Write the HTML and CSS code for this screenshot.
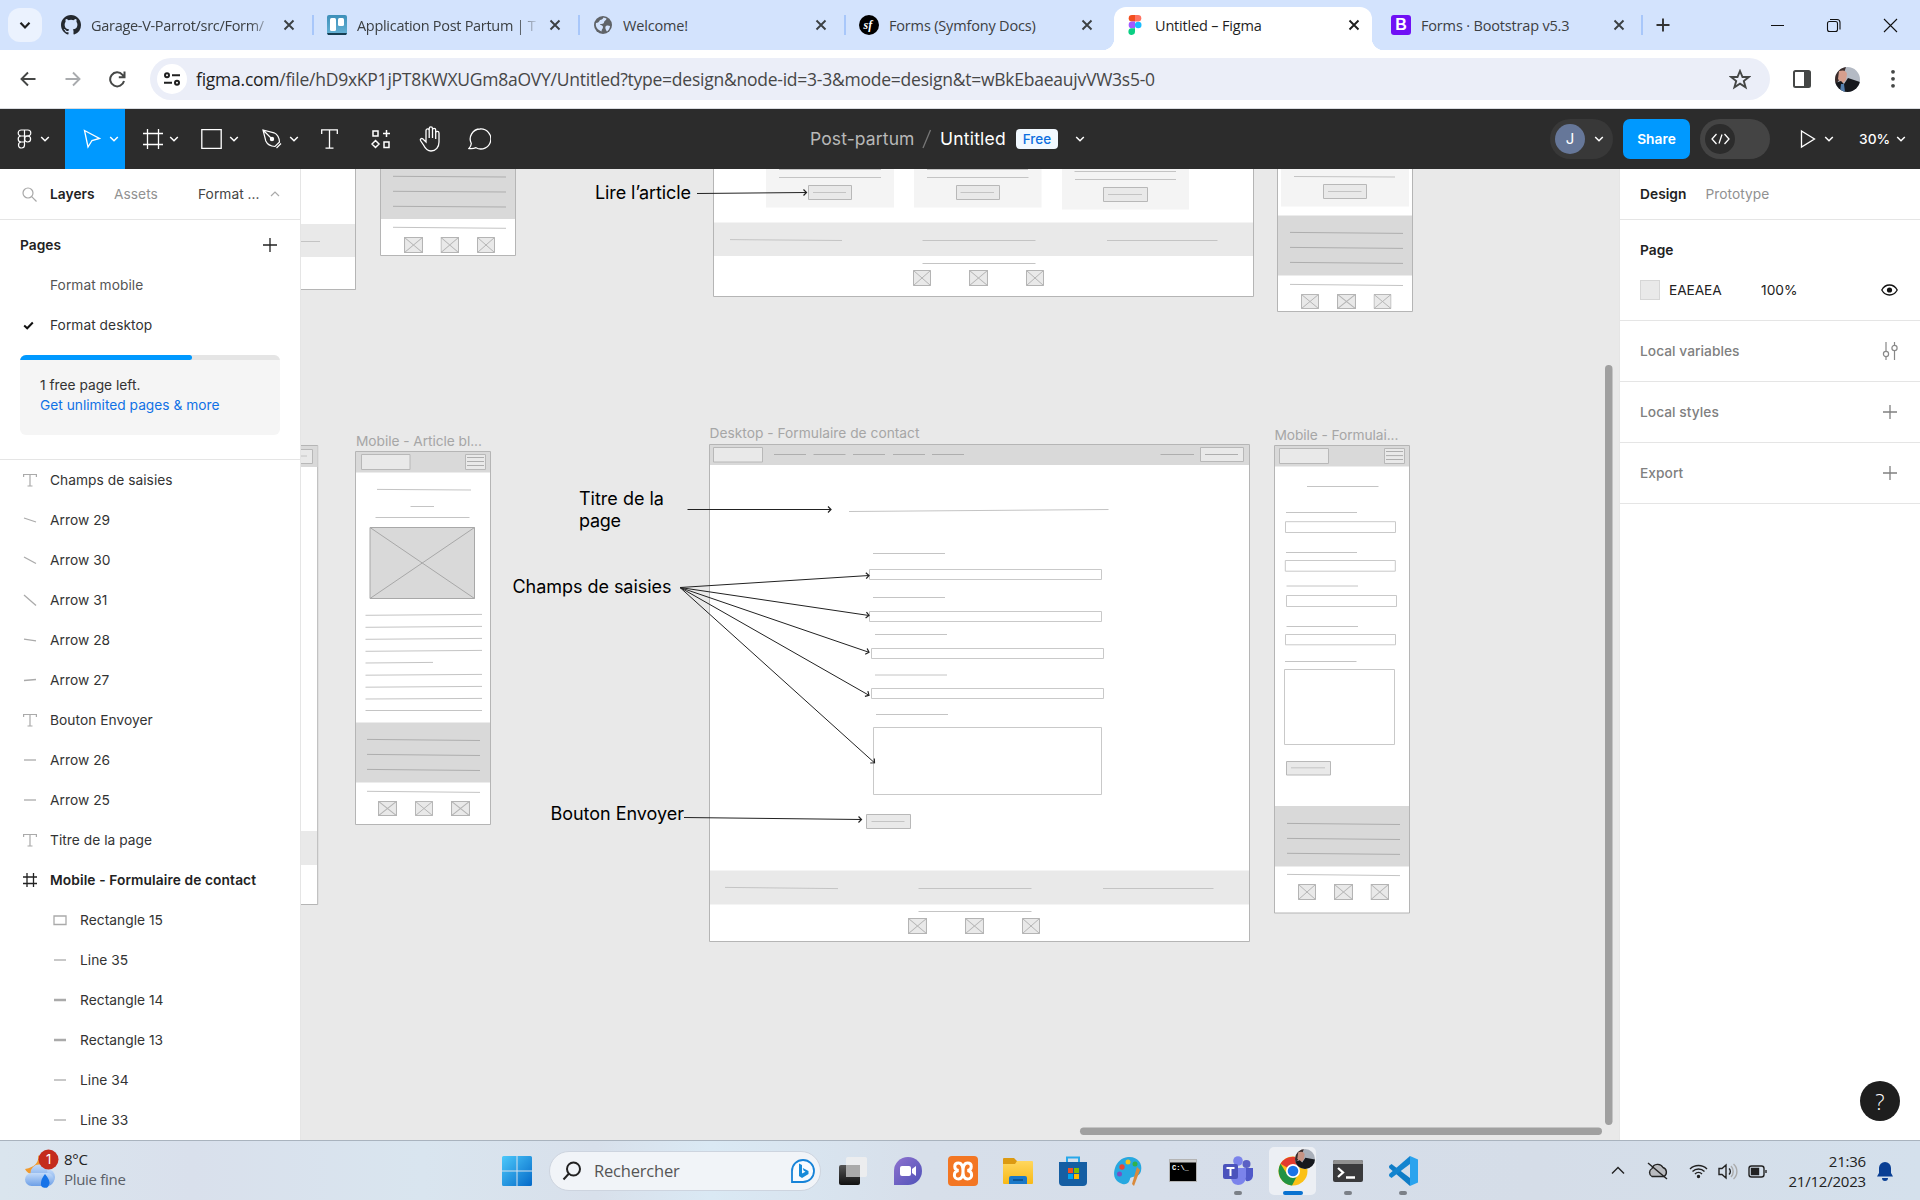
FILE: index.html
```html
<!DOCTYPE html>
<html lang="fr">
<head>
<meta charset="utf-8">
<title>Untitled – Figma</title>
<link rel="stylesheet" href="styles.css">
</head>
<body>
<svg class="defs" width="0" height="0" aria-hidden="true">
  <symbol id="chev" viewBox="0 0 10 8"><path d="M1.2 2 5 5.8 8.800 2" fill="none" stroke="currentColor" stroke-width="1.5"/></symbol>
  <symbol id="close" viewBox="0 0 12 12"><path d="M1.500 1.500 10.500 10.500M10.500 1.500 1.500 10.500" fill="none" stroke="currentColor" stroke-width="1.900"/></symbol>
  <symbol id="plus" viewBox="0 0 14 14"><path d="M7 0V14M0 7H14" fill="none" stroke="currentColor" stroke-width="1.300"/></symbol>
  <symbol id="text" viewBox="0 0 14 14"><path d="M.6 4V1.500H13.400V4M7 1.500V13M4.500 13H9.500" fill="none" stroke="currentColor" stroke-width="1.200"/></symbol>
  <symbol id="xbox" viewBox="0 0 18 16" preserveAspectRatio="none"><path d="M.5.5H17.500V15.500H.5ZM.5.5 17.500 15.500M17.500.5.5 15.500" fill="#e9e9e9" stroke="#b4b4b4"/></symbol>
</svg>

<header class="tabstrip">
  <div class="tab-search"><svg width="12" height="9" viewBox="0 0 12 9"><path d="M1.500 1.800 6 6.500 10.500 1.800" fill="none" stroke="#1f1f1f" stroke-width="2.200"/></svg></div>
  <div class="tab"><svg class="fav" viewBox="0 0 16 16"><path fill="#24292f" d="M8 0C3.580 0 0 3.580 0 8c0 3.540 2.290 6.530 5.470 7.590.4.070.55-.17.55-.38 0-.19-.01-.82-.01-1.490-2.010.37-2.530-.49-2.690-.94-.09-.23-.48-.94-.82-1.130-.28-.15-.68-.52-.01-.53.63-.01 1.080.58 1.230.82.72 1.210 1.870.87 2.330.66.070-.52.28-.87.51-1.070-1.780-.2-3.640-.89-3.640-3.950 0-.87.31-1.590.82-2.150-.08-.2-.36-1.020.08-2.120 0 0 .67-.21 2.200.82a7.600 7.600 0 0 1 4 0c1.530-1.040 2.200-.82 2.200-.82.44 1.100.16 1.920.08 2.120.51.56.82 1.270.82 2.150 0 3.070-1.870 3.750-3.650 3.950.29.25.54.73.54 1.480 0 1.070-.01 1.930-.01 2.200 0 .21.15.46.55.38A8 8 0 0 0 16 8c0-4.420-3.580-8-8-8"/></svg><span class="tab-title fade">Garage-V-Parrot/src/Form/</span><svg class="x"><use href="#close"/></svg></div>
  <div class="tab sep"><svg class="fav" viewBox="0 0 20 20"><defs><linearGradient id="tr" x2="0" y2="1"><stop stop-color="#3d8fb8"/><stop offset="1" stop-color="#67b3d6"/></linearGradient></defs><rect width="20" height="20" rx="2" fill="url(#tr)"/><path d="M0 18h20l-1 2H1Z" fill="#173e52"/><rect x="3" y="3" width="6" height="13" rx="1.500" fill="#fff"/><rect x="11" y="3" width="6" height="8" rx="1.500" fill="#fff"/></svg><span class="tab-title fade">Application Post Partum | T</span><svg class="x"><use href="#close"/></svg></div>
  <div class="tab sep"><svg class="fav" viewBox="0 0 20 20"><circle cx="10" cy="10" r="9" fill="#5f6368"/><path d="M3 8c2 0 3-1 4-3 1.500 0 3-1 3.500-2.500l3 1c0 2-2.500 2-2.500 4 0 1.500-2 1.500-4 1.500 0 1.500 3 1 3 3s-1.500 2-1.500 4.500C5 15 2 12 3 8Zm10 3c2-1 3 0 4 0 0 2-1.500 4.500-3 5.500-1-1.500-2.500-4-1-5.500Z" fill="#d3e3fd"/></svg><span class="tab-title">Welcome!</span><svg class="x"><use href="#close"/></svg></div>
  <div class="tab sep"><svg class="fav" viewBox="0 0 20 20"><circle cx="10" cy="10" r="10" fill="#000"/><text x="4.500" y="14" class="sf">sf</text></svg><span class="tab-title">Forms (Symfony Docs)</span><svg class="x"><use href="#close"/></svg></div>
  <div class="tab active"><svg class="fav" viewBox="0 0 20 20"><path d="M10 0H7a3.300 3.300 0 0 0 0 6.600h3Z" fill="#f24e1e"/><path d="M10 0h3a3.300 3.300 0 0 1 0 6.600h-3Z" fill="#ff7262"/><path d="M10 6.600H7a3.300 3.300 0 0 0 0 6.700h3Z" fill="#a259ff"/><circle cx="13.200" cy="10" r="3.300" fill="#1abcfe"/><path d="M10 13.300H7a3.300 3.300 0 1 0 3 3.300Z" fill="#0acf83"/></svg><span class="tab-title">Untitled – Figma</span><svg class="x"><use href="#close"/></svg></div>
  <div class="tab"><span class="fav boot">B</span><span class="tab-title">Forms · Bootstrap v5.3</span><svg class="x"><use href="#close"/></svg></div>
  <div class="newtab"><svg width="14" height="14" viewBox="0 0 14 14"><path d="M7 .5V13.500M.5 7H13.500" stroke="#333" stroke-width="1.900"/></svg></div>
  <div class="win"><svg width="130" height="16" viewBox="0 0 130 16" fill="none" stroke="#111" stroke-width="1.100"><path d="M1 8.500H14M114 2 127 15M127 2 114 15"/><rect x="57.500" y="4.500" width="10" height="10" rx="2"/><path d="M60 2.500h7a3 3 0 0 1 3 3v7"/></svg></div>
</header>

<nav class="toolbar">
  <div class="nav-ico"><svg width="16" height="16" viewBox="0 0 16 16" fill="none" stroke="#454746" stroke-width="1.900"><path d="M15.500 8H2M8 1.500 1.500 8 8 14.500"/></svg></div>
  <div class="nav-ico"><svg width="16" height="16" viewBox="0 0 16 16" fill="none" stroke="#a9abae" stroke-width="1.900"><path d="M.5 8H14M8 1.500 14.500 8 8 14.500"/></svg></div>
  <div class="nav-ico"><svg width="17" height="17" viewBox="0 0 17 17" fill="none" stroke="#454746" stroke-width="2"><path d="M15 10A7 7 0 1 1 13.500 3.800L15 5.500M15.500.5V6.200H9.800"/></svg></div>
  <div class="url">
    <span class="site"><svg width="16" height="14" viewBox="0 0 16 14" fill="none" stroke="#1f1f1f" stroke-width="2"><circle cx="3" cy="3.200" r="2"/><path d="M8 3.200H16M0 10.800H8"/><circle cx="13" cy="10.800" r="2"/></svg></span>
    <span class="url-text"><b>figma.com</b>/file/hD9xKP1jPT8KWXUGm8aOVY/Untitled?type=design&amp;node-id=3-3&amp;mode=design&amp;t=wBkEbaeaujvVW3s5-0</span>
    <svg class="star" width="22" height="21" viewBox="0 0 22 21"><path d="M11 2 13.500 8H19.800L14.800 12 16.600 18.300 11 14.700 5.400 18.300 7.200 12 2.200 8H8.500Z" fill="none" stroke="#454746" stroke-width="1.900"/></svg>
  </div>
  <svg class="panel-ico" width="18" height="18" viewBox="0 0 18 18"><rect x="1" y="1" width="16" height="16" rx="1.500" fill="none" stroke="#454746" stroke-width="2"/><path d="M11 1h6v16h-6Z" fill="#454746"/></svg>
  <svg class="me" width="25" height="25" viewBox="0 0 25 25"><clipPath id="c"><circle cx="12.500" cy="12.500" r="12.500"/></clipPath><g clip-path="url(#c)"><path fill="#b4bac4" d="M0 0h25v25H0Z"/><path fill="#3a2c2b" d="M0 0H11L9 6 2 16H0Z"/><path fill="#d69f8e" d="M4 4Q11 2 12 7L11 13 7 17 3 12Z"/><path fill="#16181d" d="M0 16 6 14 9 17 13 11 25 15V25H0Z"/><path fill="#557fae" d="M6 17h3l1 8H5Z"/></g></svg>
  <svg class="dots" width="4" height="20" viewBox="0 0 4 20" fill="#454746"><circle cx="2" cy="2.800" r="1.900"/><circle cx="2" cy="9.800" r="1.900"/><circle cx="2" cy="16.800" r="1.900"/></svg>
</nav>

<div class="figbar">
  <div class="tools">
    <div class="tool menu"><svg width="15" height="20" viewBox="0 0 15 20" fill="none" stroke="#fff" stroke-width="1.200"><path d="M7.500 1H4.200a3 3 0 0 0 0 6H7.500ZM7.500 1h3.300a3 3 0 0 1 0 6H7.500ZM7.500 7H4.200a3 3 0 0 0 0 6H7.500ZM7.500 13H4.200a3 3 0 1 0 3.300 3Z"/><circle cx="10.600" cy="10" r="3"/></svg><svg class="ch"><use href="#chev"/></svg></div>
    <div class="tool on"><svg width="18" height="20" viewBox="0 0 18 20" fill="none" stroke="#fff" stroke-width="1.300"><path d="M1.500 1.500 16.500 9.500 9 11.500 5 18Z"/></svg><svg class="ch"><use href="#chev"/></svg></div>
    <div class="tool"><svg width="20" height="20" viewBox="0 0 20 20" fill="none" stroke="#fff" stroke-width="1.300"><path d="M4.500 0V20M15.500 0V20M0 4.500H20M0 15.500H20"/></svg><svg class="ch"><use href="#chev"/></svg></div>
    <div class="tool wide"><svg width="21" height="20" viewBox="0 0 21 20" fill="none" stroke="#fff" stroke-width="1.300"><path d="M.8.7H20.200V19.300H.8Z"/></svg><svg class="ch"><use href="#chev"/></svg></div>
    <div class="tool wide"><svg width="20" height="20" viewBox="0 0 20 20" fill="none" stroke="#fff" stroke-width="1.200"><path d="M1 1 12 3.800Q17 6 17.500 13L13 17.500Q6 17 3.800 12ZM1 1 9 9M19 14.500 14.500 19"/><circle cx="10" cy="10" r="1.600" fill="#fff"/></svg><svg class="ch"><use href="#chev"/></svg></div>
    <div class="tool one"><svg width="17" height="20" viewBox="0 0 17 20" fill="none" stroke="#fff" stroke-width="1.300"><path d="M.7 5V.9H16.300V5M8.500 1V19M4.500 19.200H12.500"/></svg></div>
    <div class="tool one"><svg width="20" height="20" viewBox="0 0 20 20" fill="none" stroke="#fff" stroke-width="1.500"><path d="M2 2H7V7H2ZM13 13H18V18.500H13ZM15.500 1V8M12 4.500H19M4.500 11.500 8 15 4.500 18.500 1 15Z"/></svg></div>
    <div class="tool one"><svg width="23" height="26" viewBox="0 0 23 26" fill="none" stroke="#fff" stroke-width="1.300"><path d="M7 14V4.500a1.600 1.600 0 0 1 3.200 0V12 2.500a1.600 1.600 0 0 1 3.300 0V12 4a1.600 1.600 0 0 1 3.200 0v9-6a1.600 1.600 0 0 1 3.300 0V16c0 5-3 9-8 9-4 0-6-3-7.500-6L1.500 14.500C.8 13 2.500 12 3.700 12.800L7 16Z"/></svg></div>
    <div class="tool one"><svg width="23" height="22" viewBox="0 0 23 22" fill="none" stroke="#fff" stroke-width="1.300"><path d="M12 1a10 10 0 1 1-4 18.700Q5 21 1 20.500 3 18.500 3.300 15.500A10 10 0 0 1 12 1Z"/></svg></div>
  </div>
  <div class="doc"><span class="proj">Post-partum</span><svg width="10" height="20" viewBox="0 0 10 20"><path d="M1 19 8.500 1" stroke="#777" stroke-width="1.300"/></svg><span class="name">Untitled</span><span class="free">Free</span><svg class="ch"><use href="#chev"/></svg></div>
  <div class="right-tools">
    <div class="user"><span class="j">J</span><svg class="ch"><use href="#chev"/></svg></div>
    <div class="share">Share</div>
    <div class="toggle"><span><svg width="19" height="12" viewBox="0 0 19 12" fill="none" stroke="#fff" stroke-width="1.300"><path d="M5.500 1 1 6 5.500 11M13.500 1 18 6 13.500 11M11 1.500 8 10.500"/></svg></span></div>
    <div class="play"><svg width="16" height="20" viewBox="0 0 16 20" fill="none" stroke="#fff" stroke-width="1.300"><path d="M1.500 2 14.500 10 1.500 18Z"/></svg><svg class="ch"><use href="#chev"/></svg></div>
    <div class="zoom">30%<svg class="ch"><use href="#chev"/></svg></div>
  </div>
</div>

<main class="work">
  <aside class="left">
    <div class="left-tabs"><svg width="15" height="15" viewBox="0 0 15 15" fill="none" stroke="#a8a8a8" stroke-width="1.200"><circle cx="6" cy="6" r="5"/><path d="M9.700 9.700 14.500 14.500"/></svg><b>Layers</b><span class="dim">Assets</span><span class="cur">Format ...</span><svg class="up" width="10" height="8" viewBox="0 0 10 8"><path d="M1 6 5 2 9 6" fill="none" stroke="#aaa" stroke-width="1.200"/></svg></div>
    <div class="pages-head"><b>Pages</b><svg width="14" height="14"><use href="#plus"/></svg></div>
    <div class="page dim2">Format mobile</div>
    <div class="page"><svg width="11" height="9" viewBox="0 0 11 9"><path d="M1.200 4.500 4.200 7.300 9.800 1.500" fill="none" stroke="#111" stroke-width="2"/></svg>Format desktop</div>
    <div class="quota"><div class="bar"><i></i></div><p>1 free page left.</p><p class="link">Get unlimited pages &amp; more</p></div>
    <ul class="layers">
      <li><svg><use href="#text"/></svg>Champs de saisies</li>
      <li><svg viewBox="0 0 14 14"><path d="M1 5 13 9"/></svg>Arrow 29</li>
      <li><svg viewBox="0 0 14 14"><path d="M1 4 13 10.500"/></svg>Arrow 30</li>
      <li><svg viewBox="0 0 14 14"><path d="M1 2 13 12.500"/></svg>Arrow 31</li>
      <li><svg viewBox="0 0 14 14"><path d="M1 6.200 13 7.800"/></svg>Arrow 28</li>
      <li><svg viewBox="0 0 14 14"><path d="M1 7.500 13 6.500"/></svg>Arrow 27</li>
      <li><svg><use href="#text"/></svg>Bouton Envoyer</li>
      <li><svg viewBox="0 0 14 14"><path d="M1 7H13"/></svg>Arrow 26</li>
      <li><svg viewBox="0 0 14 14"><path d="M1 7H13"/></svg>Arrow 25</li>
      <li><svg><use href="#text"/></svg>Titre de la page</li>
      <li class="frame"><svg viewBox="0 0 14 14"><path d="M4 0V14M10.500 0V14M0 4H14M0 10.500H14"/></svg>Mobile - Formulaire de contact</li>
      <li class="sub"><svg viewBox="0 0 14 14"><path d="M1 3H13V11.500H1Z"/></svg>Rectangle 15</li>
      <li class="sub"><svg viewBox="0 0 14 14"><path d="M1 7H13"/></svg>Line 35</li>
      <li class="sub"><svg viewBox="0 0 14 14"><path class="thick" d="M1 7H13"/></svg>Rectangle 14</li>
      <li class="sub"><svg viewBox="0 0 14 14"><path class="thick" d="M1 7H13"/></svg>Rectangle 13</li>
      <li class="sub"><svg viewBox="0 0 14 14"><path d="M1 7H13"/></svg>Line 34</li>
      <li class="sub"><svg viewBox="0 0 14 14"><path d="M1 7H13"/></svg>Line 33</li>
    </ul>
  </aside>

  <section class="canvas">
    <svg width="1318" height="971" viewBox="301 169 1318 971">
      <defs><marker id="ah" markerUnits="userSpaceOnUse" markerWidth="8" markerHeight="8" refX="4.500" refY="4" orient="auto"><path d="M1.500 1 4.500 4 1.500 7" fill="none" stroke="#222" stroke-width="1.200"/></marker></defs>

      <!-- row above: clipped wireframes -->
      <path class="w" d="M290.500 160H355.500V289.500H290.500Z"/><path class="g1" d="M301 224h54v33h-54Z"/><path class="f" d="M355.500 160V289.500"/><path class="l" d="M301 241.500H320"/>
      <path class="w" d="M380.500 160H515.500V255.500H380.500Z"/><path class="g2" d="M381 160h134v59H381Z"/>
      <path class="d" d="M393 176.300 506 177M393 191.300 506 192M393 206.300 506 207"/><path class="l" d="M393 227.300 506 228.300"/>
      <use href="#xbox" x="404" y="237" width="19" height="16"/><use href="#xbox" x="440.500" y="237" width="18.500" height="16"/><use href="#xbox" x="477" y="237" width="18" height="16"/>

      <path class="w" d="M713.500 160H1253.500V296.500H713.500Z"/><path class="g0" d="M766 160H894V207.500H766ZM914 160h127.500v47.500H914ZM1062 160h127v49.500H1062Z"/>
      <path class="g1" d="M714 222.500h539V256H714Z"/>
      <path class="b" d="M808.500 185.500H851.500V199.500H808.500ZM956.500 185.500h43v14h-43ZM1103.500 187.500h44v14h-44Z"/>
      <path class="l" d="M779 169.500H881M779 177.500H881M927 169.500h101M927 177.500h101.500M1074.500 171.500H1176M1075 179.500H1176M813 192.500H846M960.500 192.500h33.500M1108 194.500h34M730 239.600 842 240.500M922.500 240.500h113M1107 240.500h110.500M922.500 263.500h113"/>
      <use href="#xbox" x="913" y="270" width="18" height="16"/><use href="#xbox" x="969" y="270" width="19" height="16"/><use href="#xbox" x="1026" y="270" width="18" height="16"/>

      <path class="w" d="M1277.500 160H1412.500V311.500H1277.500Z"/><path class="g0" d="M1281 160h128v46.500h-128Z"/><path class="g2" d="M1278 215.500h134v60h-134Z"/><path class="b" d="M1323.500 184.500h43v14h-43Z"/>
      <path class="l" d="M1294 176.500 1395 177M1328 191.500h33.500M1290 284.400 1403 285.500"/><path class="d" d="M1290 232.400 1403 233.400M1290 247.400 1403 248.400M1290 262.400 1403 263.400"/>
      <use href="#xbox" x="1301" y="294" width="18" height="15"/><use href="#xbox" x="1337" y="294" width="19" height="15"/><use href="#xbox" x="1373.500" y="294" width="18" height="15"/>

      <!-- clipped desktop frame on the left -->
      <path class="w" d="M290.500 445.500H317.700V904.500H290.500Z"/><path class="g2" d="M300 446h17.500v21H300Z"/><path class="g1" d="M300 831h17v34H300Z"/><path class="b" d="M290 449.500h22.500v14H290Z"/><path class="l" d="M301 456H307"/>

      <!-- mobile article -->
      <text class="lbl" x="356" y="446.300" textLength="126">Mobile - Article bl...</text>
      <path class="w" d="M355.500 451.500H490.500V824.500H355.500Z"/><path class="g2" d="M356 452h134v20.500H356ZM356 722.500H490V782.500H356Z"/>
      <path class="b" d="M361.500 454.500h48.500v15H361.500ZM465.500 454.500h20v15h-20Z"/><path class="d" d="M467 457.500h17M467 461.500h17M467 465.500h17"/>
      <path class="l" d="M377 489.400 471 490M410.500 506.500H434M375.500 517.500h94M365.500 615.300 482 614.400M365.500 627.300 482 626.400M365.500 639.300 482 638.400M365.500 651.300 482 650.400M365.500 663 433 662.400M365.500 675.200 482 674.400M365.500 687.200 482 686.400M365.500 699 482 698.400M365.500 710.500H482M367 791.300 480 792.400"/>
      <path class="im" d="M370 527.500H474.500V598.500H370ZM370 527.500 474.500 598.500M474.500 527.500 370 598.500"/>
      <path class="d" d="M367 739.400 480 740.500M367 754.400 480 755.500M367 769.400 480 770.500"/>
      <use href="#xbox" x="378" y="801" width="19" height="15"/><use href="#xbox" x="415" y="801" width="18" height="15"/><use href="#xbox" x="451" y="801" width="19" height="15"/>

      <!-- desktop contact form -->
      <text class="lbl" x="709.500" y="438" textLength="210">Desktop - Formulaire de contact</text>
      <path class="w" d="M709.500 444.500H1249.500V941.500H709.500Z"/><path class="g2" d="M710 445h539v20H710Z"/><path class="g1" d="M710 870.500h539V904.500H710Z"/>
      <path class="b" d="M713.500 447.500h49v14.500h-49ZM1200.500 447.500h43v14h-43ZM866.500 814.500h44v14h-44Z"/>
      <path class="d" d="M774 454.500h32M813.500 454.500h32M853 454.500h32M893 454.500h32M932 454.500h32M1160.500 454.500h33.500M1205 454.500h33"/>
      <path class="l" d="M849 511.500 1108.500 509.500M873 553.500h72M873 597.500h72M875 634.500h72M875 675h72M876 714.500h72M871.500 821.500h33M725 887.400 838 888.600M918.500 888.500h113M1103 888.500h110.500M918.500 911.500h113"/>
      <path class="i" d="M869.500 569.500h232v10h-232ZM869.500 611.500h232v10h-232ZM871.500 648.500h232v10h-232ZM871.500 688.500h232v10h-232ZM873.500 727.500h228v67h-228Z"/>
      <use href="#xbox" x="908" y="918" width="19" height="16"/><use href="#xbox" x="965" y="918" width="19" height="16"/><use href="#xbox" x="1022" y="918" width="18" height="16"/>

      <!-- mobile contact form -->
      <text class="lbl" x="1274.500" y="440.300" textLength="124">Mobile - Formulai...</text>
      <path class="w" d="M1274.500 445.500H1409.500V913H1274.500Z"/><path class="g2" d="M1275 446h134v20.500h-134ZM1275 806h134v60.500h-134Z"/>
      <path class="b" d="M1279.500 448.500h49v15h-49ZM1384.500 448.500h20v15h-20ZM1286.500 761.500h44v13.500h-44Z"/><path class="d" d="M1386 451.500h17M1386 455.600h17M1386 459.500h17M1287 823.400 1400 824.500M1287 838.400 1400 839.500M1287 853.300 1400 854.400"/>
      <path class="l" d="M1307 486.500h71.500M1286 512.500h71M1286 552.500h71M1286.500 586h71.500M1286.500 626.500h71.500M1285 661.500h71.500M1291 767.800h34M1287 874.400 1400 875.600"/>
      <path class="i" d="M1285.500 521.700h110v10.800h-110ZM1285.300 560.500h110v10.700h-110ZM1286.500 595.500h110v11h-110ZM1285.500 634.500h110v10.300h-110ZM1284.500 669.500h110v75h-110Z"/>
      <use href="#xbox" x="1298" y="884" width="18" height="16"/><use href="#xbox" x="1334" y="884" width="19" height="16"/><use href="#xbox" x="1370.500" y="884" width="18.500" height="16"/>

      <!-- annotations -->
      <g class="note"><text x="595" y="199" textLength="96">Lire l’article</text><text x="579" y="505" textLength="85">Titre de la</text><text x="579" y="527" textLength="42">page</text><text x="512.500" y="592.500" textLength="159">Champs de saisies</text><text x="550.500" y="819.500" textLength="133.500">Bouton Envoyer</text></g>
      <g class="arrow"><path d="M697 193.500 806.500 192.500"/><path d="M687.500 509.500H831"/><path d="M680 587.500 869 575.500"/><path d="M680 587.500 869 615.500"/><path d="M680 587.500 869 652.300"/><path d="M680 587.500 869 695.300"/><path d="M680 587.500 874.500 762.800"/><path d="M684 817.500 861.500 819.500"/></g>

      <g class="scroll"><rect x="1605" y="365" width="7.500" height="760" rx="3.700"/><rect x="1080" y="1127.500" width="522" height="7.500" rx="3.700"/></g>
    </svg>
  </section>

  <aside class="props">
    <div class="prop-tabs"><b>Design</b><span>Prototype</span></div>
    <div class="page-sec"><b>Page</b><div class="fill"><i></i><span class="hex">EAEAEA</span><span>100%</span><svg width="17" height="12" viewBox="0 0 17 12"><path d="M.8 6Q3.500 1 8.500 1T16.200 6Q13.500 11 8.500 11T.8 6Z" fill="none" stroke="#111" stroke-width="1.300"/><circle cx="8.500" cy="6" r="2.600" fill="#111"/></svg></div></div>
    <div class="row">Local variables<svg width="16" height="18" viewBox="0 0 16 18" fill="none" stroke="#888" stroke-width="1.200"><path d="M4 0V9M4 15V18M12.500 0V3M12.500 9V18"/><circle cx="4" cy="12" r="2.600"/><circle cx="12.500" cy="6" r="2.600"/></svg></div>
    <div class="row">Local styles<svg width="14" height="14"><use href="#plus"/></svg></div>
    <div class="row">Export<svg width="14" height="14"><use href="#plus"/></svg></div>
    <div class="help">?</div>
  </aside>
</main>

<footer class="taskbar">
  <div class="weather">
    <svg width="42" height="44" viewBox="0 0 42 44"><defs><linearGradient id="cl" x2="0" y2="1"><stop stop-color="#c3dbfa"/><stop offset="1" stop-color="#6d9fe6"/></linearGradient></defs><path d="M18 6Q20 17 5 20 8 26 14 25 24 22 22 12Z" fill="#f09a2e"/><g fill="url(#cl)"><circle cx="27" cy="28" r="8"/><circle cx="19" cy="24" r="8.500"/><rect x="5" y="24" width="29" height="13" rx="6.500"/></g><path d="M25 25Q31 32 29 35.500A4 4 0 0 1 21 34Q21 30 25 25Z" fill="#1673e8"/><circle cx="28.500" cy="10.500" r="10" fill="#c42b1c"/><text x="28.500" y="15" text-anchor="middle" class="badge">1</text></svg>
    <div><p>8°C</p><p class="sub-w">Pluie fine</p></div>
  </div>
  <div class="apps">
    <svg class="start" width="30" height="30" viewBox="0 0 30 30"><defs><linearGradient id="wn" x2="1" y2="1"><stop stop-color="#4cc9fb"/><stop offset="1" stop-color="#0469c8"/></linearGradient></defs><path d="M0 1.500Q0 0 1.500 0H14.500V14.500H0ZM15.500 0H28.500Q30 0 30 1.500V14.500H15.500ZM0 15.500H14.500V30H1.500Q0 30 0 28.500ZM15.500 15.500H30V28.500Q30 30 28.500 30H15.500Z" fill="url(#wn)"/></svg>
    <div class="search"><svg width="20" height="20" viewBox="0 0 20 20" fill="none" stroke="#222" stroke-width="2"><circle cx="11.500" cy="8" r="6.500"/><path d="M7 12.500 1.500 18.500"/></svg><span>Rechercher</span><svg width="26" height="26" viewBox="0 0 26 26"><path d="M2 24V13A11 11 0 1 1 13 24Z" fill="#f7fbff" stroke="#1683d8" stroke-width="1.800"/><path d="M9 5.500 12 7V15.500L15.500 13.700 13.500 12.500 12.800 10 18.500 13V16L12 20 9 18Z" fill="#168bd9"/></svg></div>
    <div class="app"><svg viewBox="0 0 30 30"><defs><linearGradient id="tv" x2="0" y2="1"><stop stop-color="#555"/><stop offset="1" stop-color="#111"/></linearGradient></defs><rect x="1" y="9" width="21" height="20" rx="2" fill="url(#tv)"/><rect x="8" y="1" width="21" height="20" rx="2" fill="#eee" opacity=".9"/><path d="M8 9h14v12H8Z" fill="#aaa"/></svg></div>
    <div class="app"><svg viewBox="0 0 30 30"><defs><linearGradient id="ct" x2="1" y2="1"><stop stop-color="#8f72cf"/><stop offset="1" stop-color="#4f52b8"/></linearGradient></defs><path d="M1 29V15A14 14 0 1 1 15 29Z" fill="url(#ct)"/><rect x="7" y="10" width="11" height="10" rx="2" fill="#fff"/><path d="M19 13 23 10V20L19 17Z" fill="#fff"/></svg></div>
    <div class="app"><svg viewBox="0 0 30 30"><rect width="30" height="30" rx="4" fill="#f37623"/><path d="M10.500 7C5.500 7 5.500 13.500 10.500 14.500 5 15.500 5 23 10.500 23 15 23 15 18 15 15 15 12 15 7 10.500 7ZM19.500 7C24.500 7 24.500 13.500 19.500 14.500 25 15.500 25 23 19.500 23 15 23 15 18 15 15 15 12 15 7 19.500 7Z" fill="none" stroke="#fff" stroke-width="3"/></svg></div>
    <div class="app"><svg viewBox="0 0 30 30"><defs><linearGradient id="fd" x2="0" y2="1"><stop stop-color="#ffd75e"/><stop offset="1" stop-color="#f8b917"/></linearGradient></defs><path d="M0 3Q0 2 1 2H11L14 5H29V12H0Z" fill="#dc9a12"/><path d="M0 8H12L14 5H29Q30 5 30 6V27Q30 28 29 28H1Q0 28 0 27Z" fill="url(#fd)"/><path d="M6 28V22Q6 20 8 20H22Q24 20 24 22V28Z" fill="#1a78c8"/><path d="M10 24H20" stroke="#0a4b86" stroke-width="1.500"/></svg></div>
    <div class="app"><svg viewBox="0 0 30 30"><path d="M9 7V1.500H21V7" fill="none" stroke="#28a8ea" stroke-width="2"/><path d="M1 6H29V26Q29 30 25 30H5Q1 30 1 26Z" fill="#155ea3"/><path fill="#f25022" d="M10 12h5v5h-5Z"/><path fill="#7fba00" d="M16 12h5v5h-5Z"/><path fill="#00a4ef" d="M10 18h5v5h-5Z"/><path fill="#ffb900" d="M16 18h5v5h-5Z"/></svg></div>
    <div class="app"><svg viewBox="0 0 30 30"><path d="M15 1C24 0 30 7 28 15S18 19 17 23 13 30 7 27 0 18 2 12 8 2 15 1Z" fill="#27a8e0"/><circle cx="9" cy="11" r="2.700" fill="#e74734"/><circle cx="15" cy="6" r="2.500" fill="#f5c218"/><circle cx="22" cy="8" r="2.500" fill="#31b24b"/><circle cx="6.500" cy="18" r="2.500" fill="#7a4fc0"/><path d="M24 11 27 14 21 30 19 28Z" fill="#d98a3c"/></svg></div>
    <div class="app"><svg viewBox="0 0 30 30"><rect x="1.500" y="3.500" width="27" height="22" fill="#000" stroke="#b4b4b4"/><path d="M2 4H28V6.500H2Z" fill="#ccc"/><text x="4" y="14" class="prompt">C:\_</text></svg></div>
    <div class="app run"><svg viewBox="0 0 30 30"><circle cx="23.500" cy="8" r="4" fill="#5b60c4"/><circle cx="15" cy="5" r="4.800" fill="#7b83eb"/><path d="M17 12H30V20Q29 26 23 25Z" fill="#5059c9"/><path d="M8 12H23V21Q22 29 15 29 8 28 8 21Z" fill="#7b83eb"/><rect y="8" width="15" height="15" rx="2" fill="#4b53bc"/><path d="M3.500 12H11.500M7.500 12V20" stroke="#fff" stroke-width="2"/></svg></div>
    <div class="app cur"><svg viewBox="0 0 30 30"><circle cx="15" cy="15" r="14.500" fill="#fbc116"/><path d="M15 15 2.500 7.800A14.500 14.500 0 0 1 27.500 7.800Z" fill="#e33b2e"/><path d="M2.500 7.800A14.500 14.500 0 0 0 14 29.500L20 18 9 18Z" fill="#229342"/><circle cx="15" cy="15" r="7" fill="#fff"/><circle cx="15" cy="15" r="5.300" fill="#1a73e8"/></svg><svg class="mini" viewBox="0 0 25 25"><g clip-path="url(#c)"><path fill="#a9afb9" d="M0 0h25v25H0Z"/><path fill="#3a2c2b" d="M0 0H11L9 6 2 16H0Z"/><path fill="#c79383" d="M4 4Q11 2 12 7L11 13 7 17 3 12Z"/><path fill="#16181d" d="M0 16 6 14 9 17 13 11 25 13V25H0Z"/></g></svg></div>
    <div class="app run"><svg viewBox="0 0 30 30"><rect y="4" width="30" height="22" rx="2" fill="#3a3a3c"/><path d="M0 8V6Q0 4 2 4H28Q30 4 30 6V8Z" fill="#909090"/><path d="M5 12 10 16.500 5 21M13 21.500H22" fill="none" stroke="#fff" stroke-width="2.300"/></svg></div>
    <div class="app run"><svg viewBox="0 0 30 30"><path d="M1 10 3.500 8 22 22V30L1.200 12Z" fill="#0f7cc6"/><path d="M1 20 3.500 22 22 8V0L1.200 18Z" fill="#1384cf"/><path d="M22 0 30 3.500V26.500L22 30Z" fill="#2aa3ee"/></svg></div>
  </div>
  <div class="tray">
    <svg width="156" height="22" viewBox="0 0 156 22" fill="none" stroke="#222" stroke-width="1.400"><path d="M1 13.500 7 7.500 13 13.500"/><path d="M41 16.500a4.500 4.500 0 0 1 0-8 6 6 0 0 1 11-1 5 5 0 0 1 1 9Z" fill="#b9bbbf"/><path d="M37 3 56 19"/><path d="M79 9a12 12 0 0 1 17 0M81.500 11.500a8.500 8.500 0 0 1 12 0M84 14a5 5 0 0 1 7 0"/><circle cx="87.500" cy="16.500" r="1" fill="#222"/><path d="M108 8.500h3l4-3.500v13l-4-3.500h-3ZM118 8.500a4 4 0 0 1 0 6"/><path d="M120 6a8 8 0 0 1 0 11M122.500 4a10 10 0 0 1 0 15" stroke="#aaa"/><rect x="138" y="6" width="15" height="11" rx="2.500"/><path d="M155 10v3"/><path d="M140.500 8.500h7v6h-7Z" fill="#222"/></svg>
    <div class="clock"><p>21:36</p><p>21/12/2023</p></div>
    <svg width="18" height="20" viewBox="0 0 18 20"><path d="M9 1a6 6 0 0 1 6 6v5l2 3.500H1L3 12V7A6 6 0 0 1 9 1ZM6 17h6a3 3 0 0 1-6 0Z" fill="#0a3f94"/></svg>
  </div>
</footer>
</body>
</html>
```
FILE: styles.css
```css
* { box-sizing: border-box; }
body { margin: 0; width: 1920px; height: 1200px; overflow: hidden; display: flex; flex-direction: column; background: #fff; font-family: Inter, sans-serif; font-size: 13.75px; letter-spacing: .04px; color: #333; }
p { margin: 0; }
b { font-weight: 600; }
svg { display: block; flex: none; }
.defs { position: absolute; }
.ch { width: 10px; height: 8px; color: #fff; }

/* browser tabs */
.tabstrip { height: 50px; background: #d3e3fd; display: flex; align-items: center; padding-left: 8px; font-family: "Open Sans", sans-serif; color: #3c4043; flex: none; }
.tab-search { width: 34px; height: 34px; border-radius: 12px; background: #ebf2fe; display: grid; place-items: center; margin-right: 4px; }
.tab { width: 266px; height: 43px; align-self: flex-end; padding: 0 17px 7px 15px; display: flex; align-items: center; }
.tab .fav { width: 20px; height: 20px; margin-right: 10px; }
.tab-title { flex: 1; font-size: 14.5px; letter-spacing: -.17px; white-space: nowrap; overflow: hidden; margin-right: 12px; line-height: 22px; padding-top: 1px; }
.tab .fade { letter-spacing: -.3px; -webkit-mask-image: linear-gradient(90deg, #000 88%, transparent 102%); mask-image: linear-gradient(90deg, #000 88%, transparent 102%); }
.tab .x { width: 12px; height: 12px; color: #3c4043; }
.sep { background: linear-gradient(#a8c7fa, #a8c7fa) 0 8px / 2px 20px no-repeat; }
.active { background: #fff; position: relative; border-radius: 12px 12px 0 0; width: 258px; margin: 0 4px; padding: 0 12px 7px 12px; color: #1f1f1f; }
.active::before, .active::after { content: ""; position: absolute; bottom: 0; width: 12px; height: 12px; }
.active::before { left: -12px; background: radial-gradient(circle at 0 0, transparent 12px, #fff 12.500px); }
.active::after { right: -12px; background: radial-gradient(circle at 100% 0, transparent 12px, #fff 12.500px); }
.active .fav { margin-left: -1px; }
.active .x { color: #1f1f1f; }
.sf { font: italic 700 12px "Liberation Serif", serif; fill: #fff; }
.boot { background: #7010f5; color: #fff; border-radius: 3px; font: 700 16px/20px "Liberation Sans", sans-serif; text-align: center; }
.newtab { width: 42px; height: 20px; border-left: 2px solid #a8c7fa; display: grid; place-items: center; margin-left: -1px; }
.win { margin: 0 20px 0 auto; }

/* address bar */
.toolbar { height: 59px; flex: none; display: flex; align-items: center; padding-left: 5px; border-bottom: 1px solid #dadce0; background: #fff; }
.nav-ico { width: 45px; display: grid; place-items: center; }
.url { width: 1620px; height: 42px; margin-left: 10px; border-radius: 21px; background: #ebeef8; display: flex; align-items: center; padding-left: 7px; }
.site { width: 30px; height: 30px; border-radius: 50%; background: #fff; display: grid; place-items: center; margin-right: 9px; }
.url-text { font: 17.500px "Open Sans", sans-serif; letter-spacing: -.24px; color: #474747; white-space: nowrap; }
.url-text b { font-weight: 400; color: #1f1f1f; }
.star { margin: 0 19px 0 auto; }
.panel-ico { margin-left: 23px; }
.me { margin-left: 24px; }
.dots { margin-left: 31px; }

/* editor bar */
.figbar { height: 60px; flex: none; background: #2c2c2c; display: grid; grid-template-columns: 810px 1fr 370px; color: #fff; }
.tools, .doc, .right-tools, .tool, .user, .play, .zoom { display: flex; align-items: center; }
.tool { width: 60px; height: 60px; justify-content: flex-end; gap: 6px; padding-right: 6px; }
.menu { width: 65px; padding-right: 15px; gap: 8px; }
.on { background: #09f; gap: 8px; }
.wide { gap: 7px; }
.one { width: 49px; justify-content: center; padding: 0; }
.tools .one:nth-child(7) { width: 53px; }
.tools .one:nth-child(8) { width: 47px; }
.tools .one:nth-child(9) { width: 51px; }
.doc { font-size: 17.500px; padding-bottom: 1px; }
.proj { color: #b8b8b8; width: 112px; letter-spacing: .12px; }
.name { margin-left: 8px; width: 76px; letter-spacing: .2px; }
.free { width: 42px; height: 20px; border-radius: 4px; background: #f2f9ff; color: #0b6fe0; font-size: 13.500px; font-weight: 500; display: grid; place-items: center; margin-right: 17px; }
.user { width: 63px; height: 40px; border-radius: 20px; background: #383838; padding-left: 5px; gap: 9px; }
.j { width: 30px; height: 30px; border-radius: 50%; background: #667799; display: grid; place-items: center; font-size: 15px; padding-bottom: 1px; }
.share { width: 67px; height: 40px; margin-left: 10px; border-radius: 7px; background: #09f; display: grid; place-items: center; font-weight: 600; }
.toggle { width: 70px; height: 40px; margin-left: 10px; border-radius: 20px; background: #444; padding: 5px; }
.toggle span { width: 30px; height: 30px; border-radius: 50%; background: #2c2c2c; display: grid; place-items: center; }
.play { margin-left: 30px; gap: 8px; }
.zoom { margin-left: 25px; gap: 6px; font-size: 13.750px; font-weight: 500; }

/* editor */
.work { height: 971px; display: flex; flex: none; }
.left { width: 301px; border-right: 1px solid #e5e5e5; flex: none; }
.left-tabs { height: 51px; border-bottom: 1px solid #e5e5e5; display: flex; align-items: center; padding: 0 20px 0 22px; color: #444; }
.left-tabs b { margin-left: 13px; width: 64px; color: #222; }
.dim { color: #919191; width: 84px; }
.cur { flex: 1; }
.pages-head { height: 45px; display: flex; justify-content: space-between; align-items: center; padding: 5px 23px 0 20px; color: #222; }
.page { height: 40px; display: flex; align-items: center; padding-left: 50px; }
.dim2 { color: #555; }
.page svg { margin: 0 16px 0 -27px; }
.quota { margin: 10px 20px 0; height: 80px; border-radius: 6px; background: #f5f5f5; overflow: hidden; line-height: 20px; letter-spacing: 0; }
.bar { height: 5px; background: #e5e5e5; margin-bottom: 15px; }
.bar i { display: block; width: 172px; height: 5px; border-radius: 0 3px 3px 0; background: #09f; }
.quota p { padding-left: 20px; }
.quota .link { color: #1071e5; }
.layers { list-style: none; margin: 24px 0 0; padding: 0; border-top: 1px solid #e5e5e5; }
.layers li { height: 40px; display: flex; align-items: center; padding-left: 23px; white-space: nowrap; }
.layers svg { width: 14px; height: 14px; margin-right: 13px; fill: none; stroke: #aaa; stroke-width: 1.300; color: #aaa; }
.layers .thick { stroke-width: 2.500; }
.layers .sub { padding-left: 53px; }
.layers .frame { font-weight: 600; color: #222; letter-spacing: .1px; }
.layers .frame svg { stroke: #222; }
.canvas { width: 1318px; background: #e9e9e9; flex: none; }

/* wireframes */
.canvas path { fill: none; }
.canvas .w { fill: #fff; stroke: #b5b5b5; }
.canvas .g0 { fill: #f4f4f4; }
.canvas .g1 { fill: #e9e9e9; }
.canvas .g2 { fill: #d9d9d9; }
.canvas .f { stroke: #b5b5b5; }
.canvas .b { fill: #e9e9e9; stroke: #b8b8b8; }
.canvas .im { fill: #d9d9d9; stroke: #a8a8a8; }
.canvas .i { stroke: #c9c9c9; }
.canvas .l { stroke: #c4c4c4; }
.canvas .d { stroke: #aeaeae; }
.lbl { font-size: 13.750px; fill: #a6a6a6; }
.note { font-size: 18px; fill: #000; }
.arrow { stroke: #222; stroke-width: 1; }
.arrow > path { marker-end: url(#ah); }
.scroll { fill: #a0a0a0; }

.props { width: 301px; border-left: 1px solid #e5e5e5; display: flex; flex-direction: column; color: #222; }
.prop-tabs { height: 51px; border-bottom: 1px solid #e5e5e5; display: flex; align-items: center; padding-left: 20px; gap: 19px; }
.prop-tabs span { color: #919191; }
.page-sec { height: 101px; border-bottom: 1px solid #e5e5e5; padding: 20px 22px 0 20px; line-height: 20px; }
.fill { display: flex; align-items: center; margin-top: 20px; }
.fill i { width: 20px; height: 20px; background: #e9e9e9; border: 1px solid #d6d6d6; margin-right: 9px; }
.hex { width: 92px; letter-spacing: -.1px; }
.fill svg { margin-left: auto; }
.row { height: 61px; border-bottom: 1px solid #e5e5e5; display: flex; align-items: center; justify-content: space-between; padding: 0 23px 0 20px; color: #808080; font-weight: 500; }
.row:nth-child(3) { padding-right: 22px; }
.help { width: 40px; height: 40px; border-radius: 50%; background: #1e1e1e; color: #fff; font: 300 22px/40px "Open Sans", sans-serif; text-align: center; margin: auto 20px 19px auto; }

/* taskbar */
.taskbar { height: 60px; flex: none; border-top: 1px solid #a9b3be; background: linear-gradient(90deg, #dae5ee 0, #d9e0ec 10%, #d9e5ef 22%, #d8e0eb 31%, #dae9f4 37%, #d7dfea 48%, #d6deea 60%, #d5dde8 80%, #d4e0ec 100%); display: flex; align-items: center; font-family: "Open Sans", sans-serif; color: #222; line-height: 20px; }
.weather { width: 502px; display: flex; padding-left: 20px; gap: 2px; font-size: 15px; letter-spacing: -.3px; }
.sub-w { color: #5a6068; }
.badge { font: 13px Inter, sans-serif; fill: #fff; }
.apps { display: flex; align-items: center; }
.search { width: 272px; height: 40px; border-radius: 20px; margin: 0 8px 0 17px; background: #f1f4f8; border: 1px solid #cdd4df; display: flex; align-items: center; padding: 0 4px 0 12px; }
.search span { flex: 1; margin-left: 12px; font-size: 16.500px; letter-spacing: -.2px; color: #555; }
.app { width: 47px; height: 48px; margin-right: 8px; display: grid; place-items: center; border-radius: 5px; position: relative; }
.app > svg { width: 30px; height: 30px; }
.prompt { font: 700 7px "Liberation Mono", monospace; letter-spacing: 0; fill: #fff; }
.run::after, .app.cur::after { content: ""; position: absolute; bottom: 0; left: 20px; width: 8px; height: 4px; border-radius: 2px; background: #7b8087; }
.app.cur { background: #eceff4; flex: none; }
.app.cur::after { width: 20px; left: 14px; background: #0a72d0; }
.app .mini { position: absolute; right: 1px; top: 2px; width: 20px; height: 20px; }
.tray { margin-left: auto; display: flex; align-items: center; padding-right: 26px; }
.clock { width: 99px; text-align: right; font-size: 15px; letter-spacing: -.2px; margin-right: 10px; }
```
